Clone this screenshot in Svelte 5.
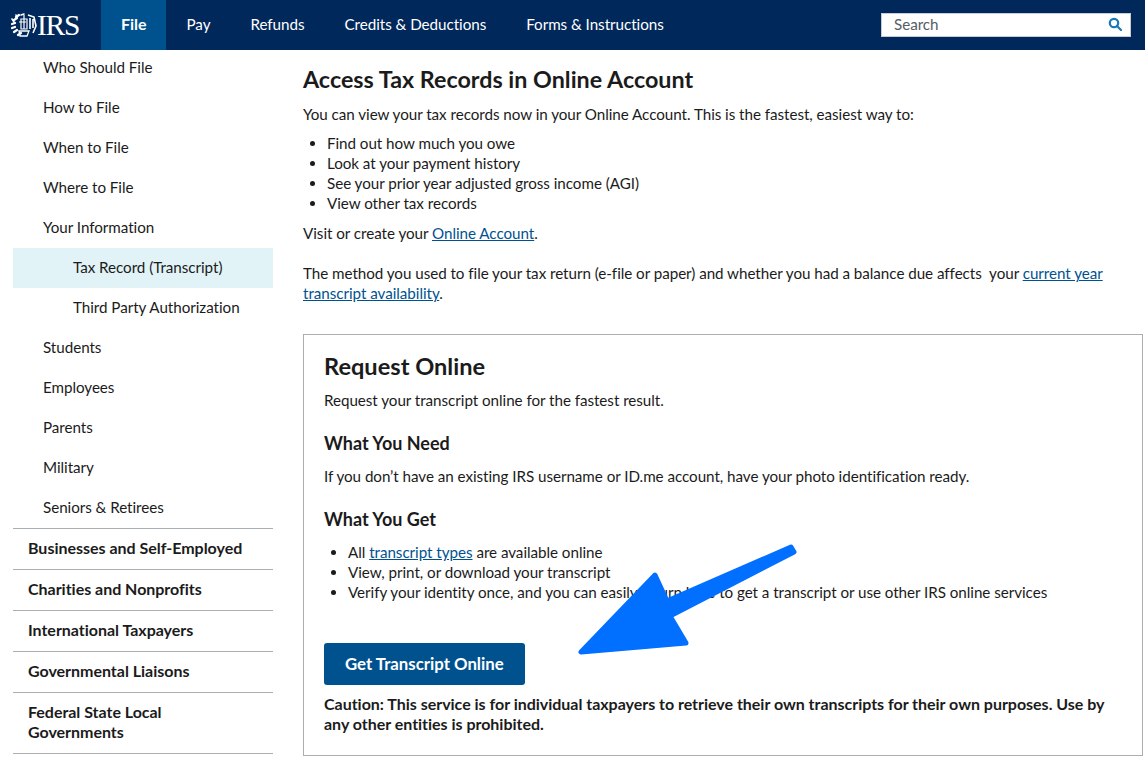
<script>
  const navItems = ['File', 'Pay', 'Refunds', 'Credits & Deductions', 'Forms & Instructions'];
  const sideLinks = [
    { label: 'Who Should File' },
    { label: 'How to File' },
    { label: 'When to File' },
    { label: 'Where to File' },
    { label: 'Your Information' },
    { label: 'Tax Record (Transcript)', sub: true, active: true },
    { label: 'Third Party Authorization', sub: true },
    { label: 'Students' },
    { label: 'Employees' },
    { label: 'Parents' },
    { label: 'Military' },
    { label: 'Seniors & Retirees' }
  ];
  const sideSections = [
    'Businesses and Self-Employed',
    'Charities and Nonprofits',
    'International Taxpayers',
    'Governmental Liaisons',
    'Federal State Local Governments'
  ];
</script>

<div class="page">
  <header class="topbar">
    <div class="logo">
      <svg class="eagle" width="26" height="24" viewBox="0 0 26 24" fill="none" stroke="#fff">
        <!-- wreath leaves -->
        <path d="M5 4l3-2M3 7l3-2M1 11l3-1M1 15l3-1M3 19l3-2M7 22l3-2" stroke-width="2.2" stroke-linecap="round"/>
        <path d="M1 6l2 3M5 2l1 2M10 2l3-1" stroke-width="1.6" stroke-linecap="round"/>
        <!-- pillar and wing -->
        <path d="M10 6h6v10h-6z" stroke-width="1.2"/>
        <path d="M13 2v14M8 9h7" stroke-width="1.2"/>
        <path d="M17 2l6 2 2 9-3 7M19 5v11M22 6v9" stroke-width="1.6"/>
        <!-- base -->
        <path d="M8 18h10l-2 5H9z" stroke-width="1.3"/>
      </svg>
      <span class="wordmark">IRS</span>
    </div>
    <nav class="mainnav">
      {#each navItems as item, i}
        <span class="navitem" class:current={i === 0}>{item}</span>
      {/each}
    </nav>
    <div class="search">
      <span>Search</span>
      <svg width="14" height="14" viewBox="0 0 14 14" fill="none" stroke="#1a77b8" stroke-width="2.2">
        <circle cx="6" cy="6" r="4.2"/>
        <path d="M9 9l4 4" stroke-linecap="round"/>
      </svg>
    </div>
  </header>

  <div class="columns">
    <aside class="sidebar">
      {#each sideLinks as link}
        <div class="sidelink" class:sub={link.sub} class:active={link.active}>{link.label}</div>
      {/each}
      {#each sideSections as section}
        <div class="sidesection">{section}</div>
      {/each}
      <div class="sideend"></div>
    </aside>

    <main class="content">
      <h2>Access Tax Records in Online Account</h2>
      <p>You can view your tax records now in your Online Account. This is the fastest, easiest way to:</p>
      <ul>
        <li>Find out how much you owe</li>
        <li>Look at your payment history</li>
        <li>See your prior year adjusted gross income (AGI)</li>
        <li>View other tax records</li>
      </ul>
      <p>Visit or create your <a href="#top">Online Account</a>.</p>
      <p class="method">The method you used to file your tax return (e-file or paper) and whether you had a balance due affects &nbsp;your <a href="#top">current year transcript availability</a>.</p>

      <section class="card">
        <h2>Request Online</h2>
        <p>Request your transcript online for the fastest result.</p>
        <h3>What You Need</h3>
        <p>If you don’t have an existing IRS username or ID.me account, have your photo identification ready.</p>
        <h3>What You Get</h3>
        <ul>
          <li>All <a href="#top">transcript types</a> are available online</li>
          <li>View, print, or download your transcript</li>
          <li>Verify your identity once, and you can easily return here to get a transcript or use other IRS online services</li>
        </ul>
        <span class="button">Get Transcript Online</span>
        <p class="caution">Caution: This service is for individual taxpayers to retrieve their own transcripts for their own purposes. Use by any other entities is prohibited.</p>
      </section>
    </main>
  </div>

  <svg class="arrow" width="240" height="130" viewBox="0 0 240 130">
    <path d="M216 7L92 61L80 35L6 112L111 103L95 76L219 12Z" fill="#016fff" stroke="#016fff" stroke-width="5" stroke-linejoin="round"/>
  </svg>
</div>

<style>
  :global(body) {
    margin: 0;
    background: #fff;
    overflow: hidden;
  }

  .page {
    position: relative;
    height: 763px;
    overflow: hidden;
    font-family: 'Lato', 'Open Sans', sans-serif;
    font-size: 15.2px;
    letter-spacing: -0.04px;
    line-height: 20px;
    color: #1b1b1b;
  }

  .topbar {
    position: relative;
    z-index: 1;
    display: flex;
    align-items: center;
    height: 50px;
    background: #00285b;
    color: #fff;
  }

  .logo {
    display: flex;
    align-items: center;
    width: 101px;
    padding-left: 11px;
    box-sizing: border-box;
  }

  .wordmark {
    font-family: 'Liberation Serif', serif;
    font-size: 29.5px;
    letter-spacing: -1.3px;
  }

  .mainnav {
    display: flex;
    height: 100%;
  }

  .navitem {
    display: flex;
    align-items: center;
    padding: 0 20px 2px;
  }

  .navitem.current {
    background: #00528f;
    font-size: 16px;
    font-weight: 700;
  }

  .search {
    display: flex;
    align-items: center;
    justify-content: space-between;
    box-sizing: border-box;
    width: 250px;
    height: 24px;
    margin-left: auto;
    margin-right: 14px;
    padding: 0 8px 2px 12px;
    background: #fff;
    border: 1px solid #c8ccd2;
    color: #565c65;
  }

  .columns {
    display: flex;
  }

  .sidebar {
    flex: none;
    width: 260px;
    margin-top: -2px;
    margin-left: 13px;
  }

  .sidelink {
    height: 40px;
    padding-left: 30px;
    line-height: 38px;
  }

  .sidelink.sub {
    padding-left: 60px;
  }

  .sidelink.active {
    background: #e1f3f6;
  }

  .sidesection {
    padding: 9px 15px 11px;
    border-top: 1px solid #a9aeb1;
    font-size: 16px;
    letter-spacing: -0.02px;
    font-weight: 700;
  }

  .sideend {
    border-top: 1px solid #a9aeb1;
  }

  .content {
    flex: none;
    width: 840px;
    margin-left: 30px;
    padding-top: 14px;
  }

  h2 {
    margin: 0 0 10px;
    font-size: 23.3px;
    line-height: 30px;
    font-weight: 700;
    letter-spacing: 0;
  }

  h3 {
    margin: 23px 0 13px;
    font-size: 18px;
    line-height: 20px;
    font-weight: 700;
    letter-spacing: 0;
  }

  p {
    margin: 0;
  }

  ul {
    margin: 9px 0 10px;
    padding-left: 24px;
  }

  a {
    color: #00528f;
    text-decoration: underline;
  }

  .method {
    margin-top: 20px;
  }

  .card {
    box-sizing: border-box;
    height: 422px;
    margin-top: 31px;
    padding: 16px 20px;
    border: 1px solid #a9aeb1;
  }

  .card h2 {
    margin-bottom: 9px;
    font-size: 23.6px;
  }

  .card ul {
    margin-top: 13px;
  }

  .button {
    display: inline-block;
    margin-top: 31px;
    padding: 11px 21px;
    background: #00528f;
    border-radius: 3px;
    color: #fff;
    font-size: 16.8px;
    letter-spacing: 0;
    font-weight: 700;
  }

  .caution {
    margin-top: 9px;
    font-size: 16px;
    letter-spacing: -0.02px;
    font-weight: 700;
  }

  .arrow {
    position: absolute;
    left: 575px;
    top: 540px;
  }
</style>
